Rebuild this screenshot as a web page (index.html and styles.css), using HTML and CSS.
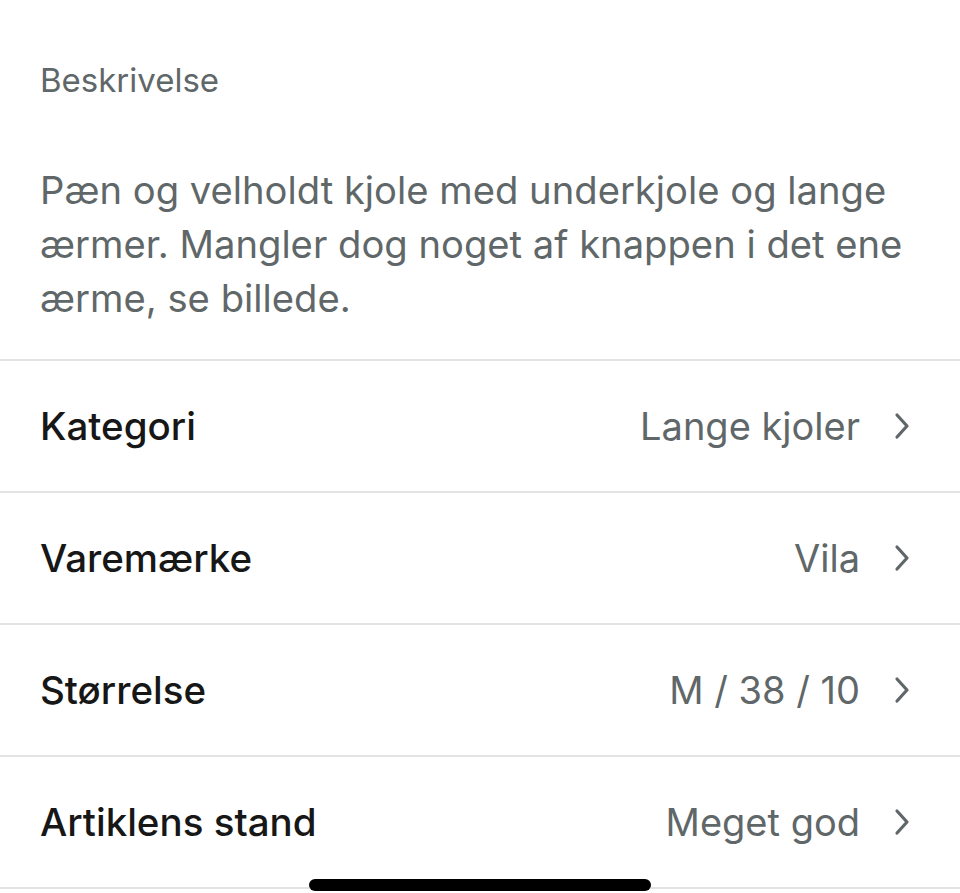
FILE: index.html
```html
<!DOCTYPE html>
<html lang="da">
<head>
<meta charset="utf-8">
<link rel="stylesheet" href="styles.css">
</head>
<body>
<main class="page">
  <section class="desc">
    <h2 class="desc-title">Beskrivelse</h2>
    <p class="desc-text">Pæn og velholdt kjole med underkjole og lange ærmer. Mangler dog noget af knappen i det ene ærme, se billede.</p>
  </section>
  <ul class="details">
    <li class="row"><span class="label">Kategori</span><span class="value">Lange kjoler</span><svg class="chev" viewBox="0 0 20 32"><path d="M5 5 L15 16 L5 27"/></svg></li>
    <li class="row"><span class="label">Varemærke</span><span class="value">Vila</span><svg class="chev" viewBox="0 0 20 32"><path d="M5 5 L15 16 L5 27"/></svg></li>
    <li class="row"><span class="label">Størrelse</span><span class="value">M / 38 / 10</span><svg class="chev" viewBox="0 0 20 32"><path d="M5 5 L15 16 L5 27"/></svg></li>
    <li class="row"><span class="label">Artiklens stand</span><span class="value">Meget god</span><svg class="chev" viewBox="0 0 20 32"><path d="M5 5 L15 16 L5 27"/></svg></li>
  </ul>
  <div class="home-indicator"></div>
</main>
</body>
</html>
```
FILE: styles.css
```css
html, body {
  margin: 0;
  padding: 0;
  background: #ffffff;
}
body {
  font-family: Inter, "Noto Sans", sans-serif;
  width: 960px;
  height: 893px;
  overflow: hidden;
}
.page {
  position: relative;
  height: 893px;
}
.desc {
  padding: 60px 40px 0;
  height: 359px;
  box-sizing: border-box;
}
.desc-title {
  margin: 0;
  font-size: 33px;
  font-weight: 400;
  line-height: 40px;
  color: #5f6769;
}
.desc-text {
  margin: 63px 0 0;
  font-size: 38.2px;
  line-height: 54px;
  font-weight: 400;
  color: #5f6769;
}
.details {
  list-style: none;
  margin: 0;
  padding: 0;
  border-top: 2px solid #e3e3e3;
}
.row {
  display: flex;
  align-items: center;
  height: 130px;
  padding: 0 48px 0 40px;
  border-bottom: 2px solid #e3e3e3;
}
.label {
  flex: 1;
  font-size: 38.5px;
  font-weight: 500;
  color: #171717;
}
.value {
  font-size: 38px;
  color: #5f6769;
  margin-right: 32px;
}
.chev {
  width: 20px;
  height: 32px;
  fill: none;
  stroke: #5f6769;
  stroke-width: 3.2;
  stroke-linecap: round;
  stroke-linejoin: round;
}
.home-indicator {
  position: absolute;
  left: 309px;
  top: 879px;
  width: 342px;
  height: 12px;
  border-radius: 6px;
  background: #000;
}
```
